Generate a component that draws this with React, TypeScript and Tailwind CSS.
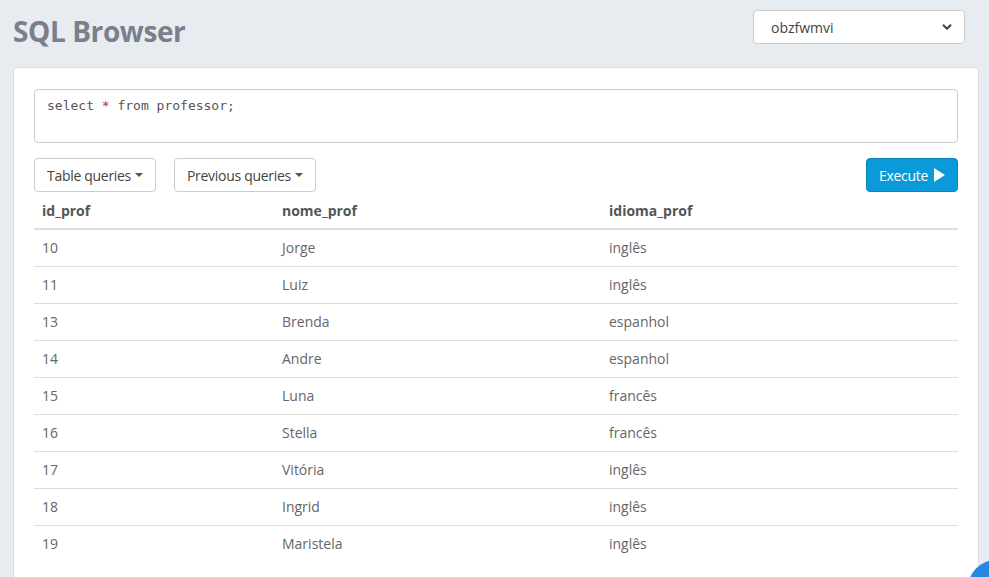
import { ChevronDown } from "lucide-react";

const rows = [
  ["10", "Jorge", "inglês"],
  ["11", "Luiz", "inglês"],
  ["13", "Brenda", "espanhol"],
  ["14", "Andre", "espanhol"],
  ["15", "Luna", "francês"],
  ["16", "Stella", "francês"],
  ["17", "Vitória", "inglês"],
  ["18", "Ingrid", "inglês"],
  ["19", "Maristela", "inglês"],
];

function Caret() {
  return <span className="ml-1 inline-block h-0 w-0 border-x-4 border-t-4 border-x-transparent border-t-[#555] align-middle" />;
}

export default function App() {
  return (
    <div
      className="relative h-[577px] w-[989px] overflow-hidden bg-[#e6ecf0] text-[#555]"
      style={{ fontFamily: '"Open Sans", "Noto Sans", sans-serif' }}
    >
      {/* Header */}
      <div className="flex items-start justify-between pl-[13px] pr-[24px] pt-[10px]">
        <h1 className="mt-[1px] text-[28px] font-bold leading-[40px] tracking-[-0.4px] text-[#7b7f8a]">SQL Browser</h1>
        <div className="flex h-[34px] w-[212px] items-center justify-between rounded border border-[#ccc] bg-white pl-[17px] pr-[10px] text-[14px] text-[#444]">
          <span>obzfwmvi</span>
          <ChevronDown className="h-[14px] w-[14px] text-[#444]" strokeWidth={3.5} />
        </div>
      </div>

      {/* Card */}
      <div className="ml-[13px] mt-[16px] h-[600px] w-[966px] rounded border border-[#d6dde3] bg-white px-[20px] pt-[21px]">
        <div className="h-[54px] w-full rounded border border-[#ccc] px-[12px] py-[6px] text-[13px] text-[#555]" style={{ fontFamily: '"DejaVu Sans Mono", monospace' }}>
          select <span className="text-[#c7254e]">*</span> from professor;
        </div>

        <div className="mt-[15px] flex items-center tracking-[-0.3px]">
          <button className="flex h-[34px] items-center rounded border border-[#ccc] bg-white px-[12px] text-[14px] text-[#444]">
            Table queries <Caret />
          </button>
          <button className="ml-[18px] flex h-[34px] items-center rounded border border-[#ccc] bg-white px-[12px] text-[14px] text-[#444]">
            Previous queries <Caret />
          </button>
          <button className="ml-auto flex h-[34px] items-center rounded border border-[#0883b9] bg-[#0b9ad9] px-[12px] text-[14px] text-white">
            Execute
            <svg className="ml-[5px]" width="12" height="14" viewBox="0 0 12 14"><path d="M1 0 L12 7 L1 14 Z" fill="white" /></svg>
          </button>
        </div>

        <table className="w-full border-collapse text-left text-[14px]">
          <thead>
            <tr className="border-b-2 border-[#ddd]">
              <th className="h-[37px] w-[240px] px-[8px] font-bold text-[#555]">id_prof</th>
              <th className="w-[327px] px-[8px] font-bold text-[#555]">nome_prof</th>
              <th className="px-[8px] font-bold text-[#555]">idioma_prof</th>
            </tr>
          </thead>
          <tbody>
            {rows.map((r, i) => (
              <tr key={r[0]} className={i < rows.length - 1 ? "border-b border-[#ddd]" : ""}>
                {r.map((c, j) => (
                  <td key={j} className="h-[37px] px-[8px] text-[#666]">{c}</td>
                ))}
              </tr>
            ))}
          </tbody>
        </table>
      </div>

      <div className="absolute left-[968px] top-[560px] h-[56px] w-[56px] rounded-full bg-[#2a86e0]" />
    </div>
  );
}
